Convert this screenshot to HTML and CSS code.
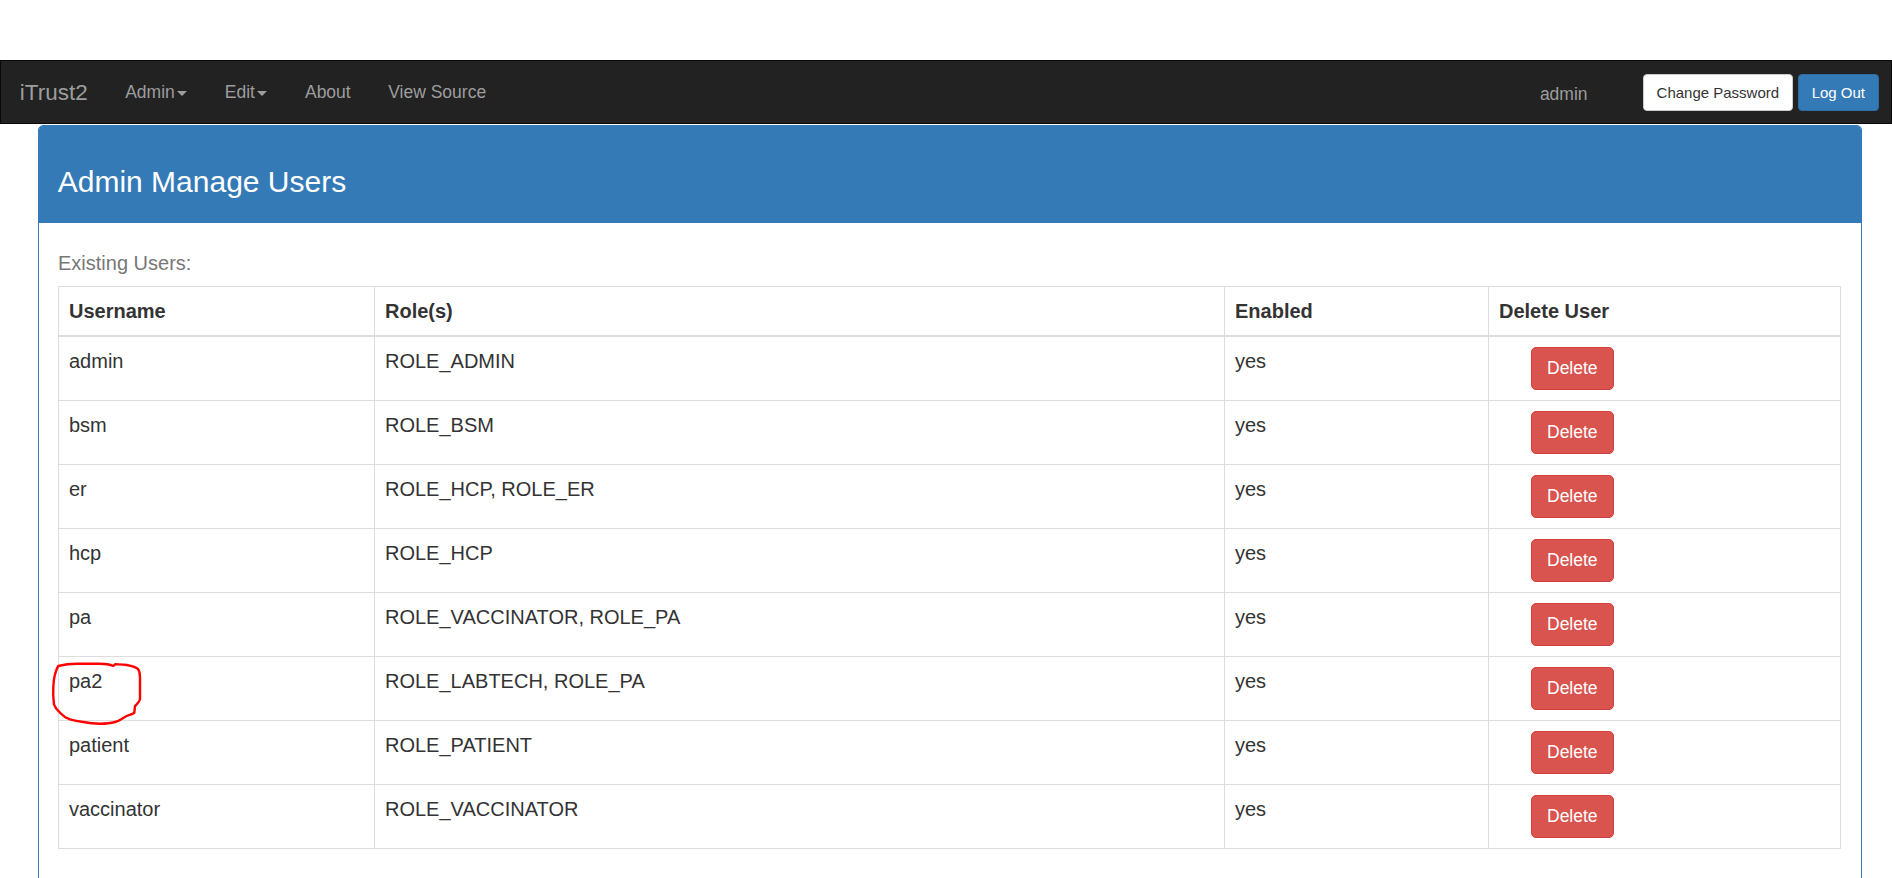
FILE: index.html
```html
<!DOCTYPE html>
<html lang="en">
<head>
<meta charset="utf-8">
<title>Admin Manage Users</title>
<link rel="stylesheet" href="styles.css">
</head>
<body>
<div class="topspace"></div>
<nav class="navbar">
  <a class="brand" href="#">iTrust2</a>
  <ul class="nav">
    <li><a href="#">Admin<span class="caret"></span></a></li>
    <li><a href="#">Edit<span class="caret"></span></a></li>
    <li><a href="#">About</a></li>
    <li><a href="#">View Source</a></li>
  </ul>
  <div class="nav-right">
    <span class="nav-user">admin</span>
    <button class="btn btn-default">Change Password</button>
    <button class="btn btn-primary">Log Out</button>
  </div>
</nav>

<div class="panel">
  <div class="panel-heading">
    <h3 class="panel-title">Admin Manage Users</h3>
  </div>
  <div class="panel-body">
    <div class="muted-label">Existing Users:</div>
    <table class="users">
      <colgroup>
        <col class="c-user">
        <col class="c-role">
        <col class="c-enabled">
        <col class="c-delete">
      </colgroup>
      <thead>
        <tr><th>Username</th><th>Role(s)</th><th>Enabled</th><th>Delete User</th></tr>
      </thead>
      <tbody>
        <tr><td>admin</td><td>ROLE_ADMIN</td><td>yes</td><td><button class="btn-danger">Delete</button></td></tr>
        <tr><td>bsm</td><td>ROLE_BSM</td><td>yes</td><td><button class="btn-danger">Delete</button></td></tr>
        <tr><td>er</td><td>ROLE_HCP, ROLE_ER</td><td>yes</td><td><button class="btn-danger">Delete</button></td></tr>
        <tr><td>hcp</td><td>ROLE_HCP</td><td>yes</td><td><button class="btn-danger">Delete</button></td></tr>
        <tr><td>pa</td><td>ROLE_VACCINATOR, ROLE_PA</td><td>yes</td><td><button class="btn-danger">Delete</button></td></tr>
        <tr><td>pa2</td><td>ROLE_LABTECH, ROLE_PA</td><td>yes</td><td><button class="btn-danger">Delete</button></td></tr>
        <tr><td>patient</td><td>ROLE_PATIENT</td><td>yes</td><td><button class="btn-danger">Delete</button></td></tr>
        <tr><td>vaccinator</td><td>ROLE_VACCINATOR</td><td>yes</td><td><button class="btn-danger">Delete</button></td></tr>
      </tbody>
    </table>
  </div>
</div>

<svg class="annotation" width="95" height="70" viewBox="0 0 95 70" aria-hidden="true">
  <path d="M8.3 7 C16 5 22 4.7 26.7 4.7 L50 4.7 C56 4.7 60 5.5 63.3 7 L65 5.3 C70 5.5 73 5.5 76.7 6 C82 7 86 8 88.3 10.3 C90 13 90 16 90 18.7 L90 40.3 C89 44 86.5 45 85 47 L84.3 53.7 C82 55.5 79 55.8 76.7 57 C72 59.5 69 62 65 63 C60 64.5 55 64.7 50 64.7 C44 64.7 38 64 33.3 63 C28 62.3 24 61.5 20 60.3 C15 58.5 12 56 10 53.7 C7 51 5 48.5 4 45.3 C3.2 40 3 34 3.3 28.7 C3.6 23 4 19 5 15.3 C6 12 7 9 8.3 7 Z" fill="none" stroke="#ff0000" stroke-width="2.4" stroke-linejoin="round" stroke-linecap="round"/>
</svg>
</body>
</html>
```

FILE: styles.css
```css
* { box-sizing: border-box; }

html, body {
  margin: 0;
  padding: 0;
  background: #ffffff;
}

body {
  font-family: "Liberation Sans", Arial, Helvetica, sans-serif;
  font-size: 20px;
  line-height: 28.6px;
  color: #333333;
  position: relative;
  overflow: hidden;
  height: 878px;
}

.topspace {
  height: 60px;
}

/* ---------- navbar ---------- */
.navbar {
  height: 64px;
  background: #222222;
  border: 1px solid #080808;
  display: flex;
  align-items: flex-start;
}

.brand {
  display: block;
  padding: 18.75px 18.75px;
  font-size: 22.5px;
  line-height: 25px;
  color: #9d9d9d;
  text-decoration: none;
}

.nav {
  list-style: none;
  margin: 0;
  padding: 0;
  display: flex;
}

.nav a {
  display: block;
  padding: 18.75px 18.75px;
  font-size: 17.5px;
  line-height: 25px;
  color: #9d9d9d;
  text-decoration: none;
}

.caret {
  display: inline-block;
  width: 0;
  height: 0;
  margin-left: 2.5px;
  vertical-align: middle;
  border-top: 5px solid #9d9d9d;
  border-left: 5px solid transparent;
  border-right: 5px solid transparent;
}

.nav-right {
  margin-left: auto;
  display: flex;
  align-items: flex-start;
  padding-right: 12.5px;
}

.nav-user {
  display: block;
  padding-top: 21px;
  font-size: 17.5px;
  line-height: 25px;
  color: #9d9d9d;
  margin-right: 55.5px;
}

.btn {
  margin-top: 12.75px;
  height: 37px;
  padding: 0 12.5px;
  font-family: "Liberation Sans", Arial, sans-serif;
  font-size: 15px;
  line-height: 35px;
  border: 1px solid #cccccc;
  border-radius: 4px;
  cursor: pointer;
}

.btn-default {
  background: #ffffff;
  color: #333333;
  border-color: #cccccc;
}

.btn-primary {
  margin-left: 5.5px;
  background: #337ab7;
  color: #ffffff;
  border-color: #2e6da4;
}

/* ---------- panel ---------- */
.panel {
  margin: 1px 30px 0 38px;
  border: 1px solid #337ab7;
  border-radius: 5px 5px 0 0;
  height: 900px;
}

.panel-heading {
  background: #337ab7;
  color: #ffffff;
  padding: 38.8px 18.75px 25.2px;
  border-radius: 4px 4px 0 0;
}

.panel-title {
  margin: 0;
  font-size: 30px;
  line-height: 33px;
  font-weight: normal;
}

.panel-body {
  padding: 26.5px 21px 40px 19px;
}

.muted-label {
  color: #777777;
  font-size: 20px;
  line-height: 28.6px;
  margin-bottom: 7.6px;
}

/* ---------- table ---------- */
.users {
  width: 1782px;
  border-collapse: collapse;
  table-layout: fixed;
  border: 1px solid #dddddd;
}

.c-user { width: 316px; }
.c-role { width: 850px; }
.c-enabled { width: 264px; }
.c-delete { width: 352px; }

.users th,
.users td {
  padding: 10px;
  border: 1px solid #dddddd;
  text-align: left;
  line-height: 28.6px;
  font-size: 20px;
}

.users th {
  font-weight: bold;
  vertical-align: bottom;
  border-bottom: 2px solid #dddddd;
}

.users td {
  vertical-align: top;
}

.btn-danger {
  display: block;
  margin-left: 32px;
  height: 43px;
  padding: 0 15px;
  font-family: "Liberation Sans", Arial, sans-serif;
  font-size: 17.5px;
  line-height: 41px;
  color: #ffffff;
  background: #d9534f;
  border: 1px solid #d43f3a;
  border-radius: 5px;
  cursor: pointer;
}

/* hand-drawn annotation circle over the "pa2" cell */
.annotation {
  position: absolute;
  left: 50px;
  top: 659px;
}
```
